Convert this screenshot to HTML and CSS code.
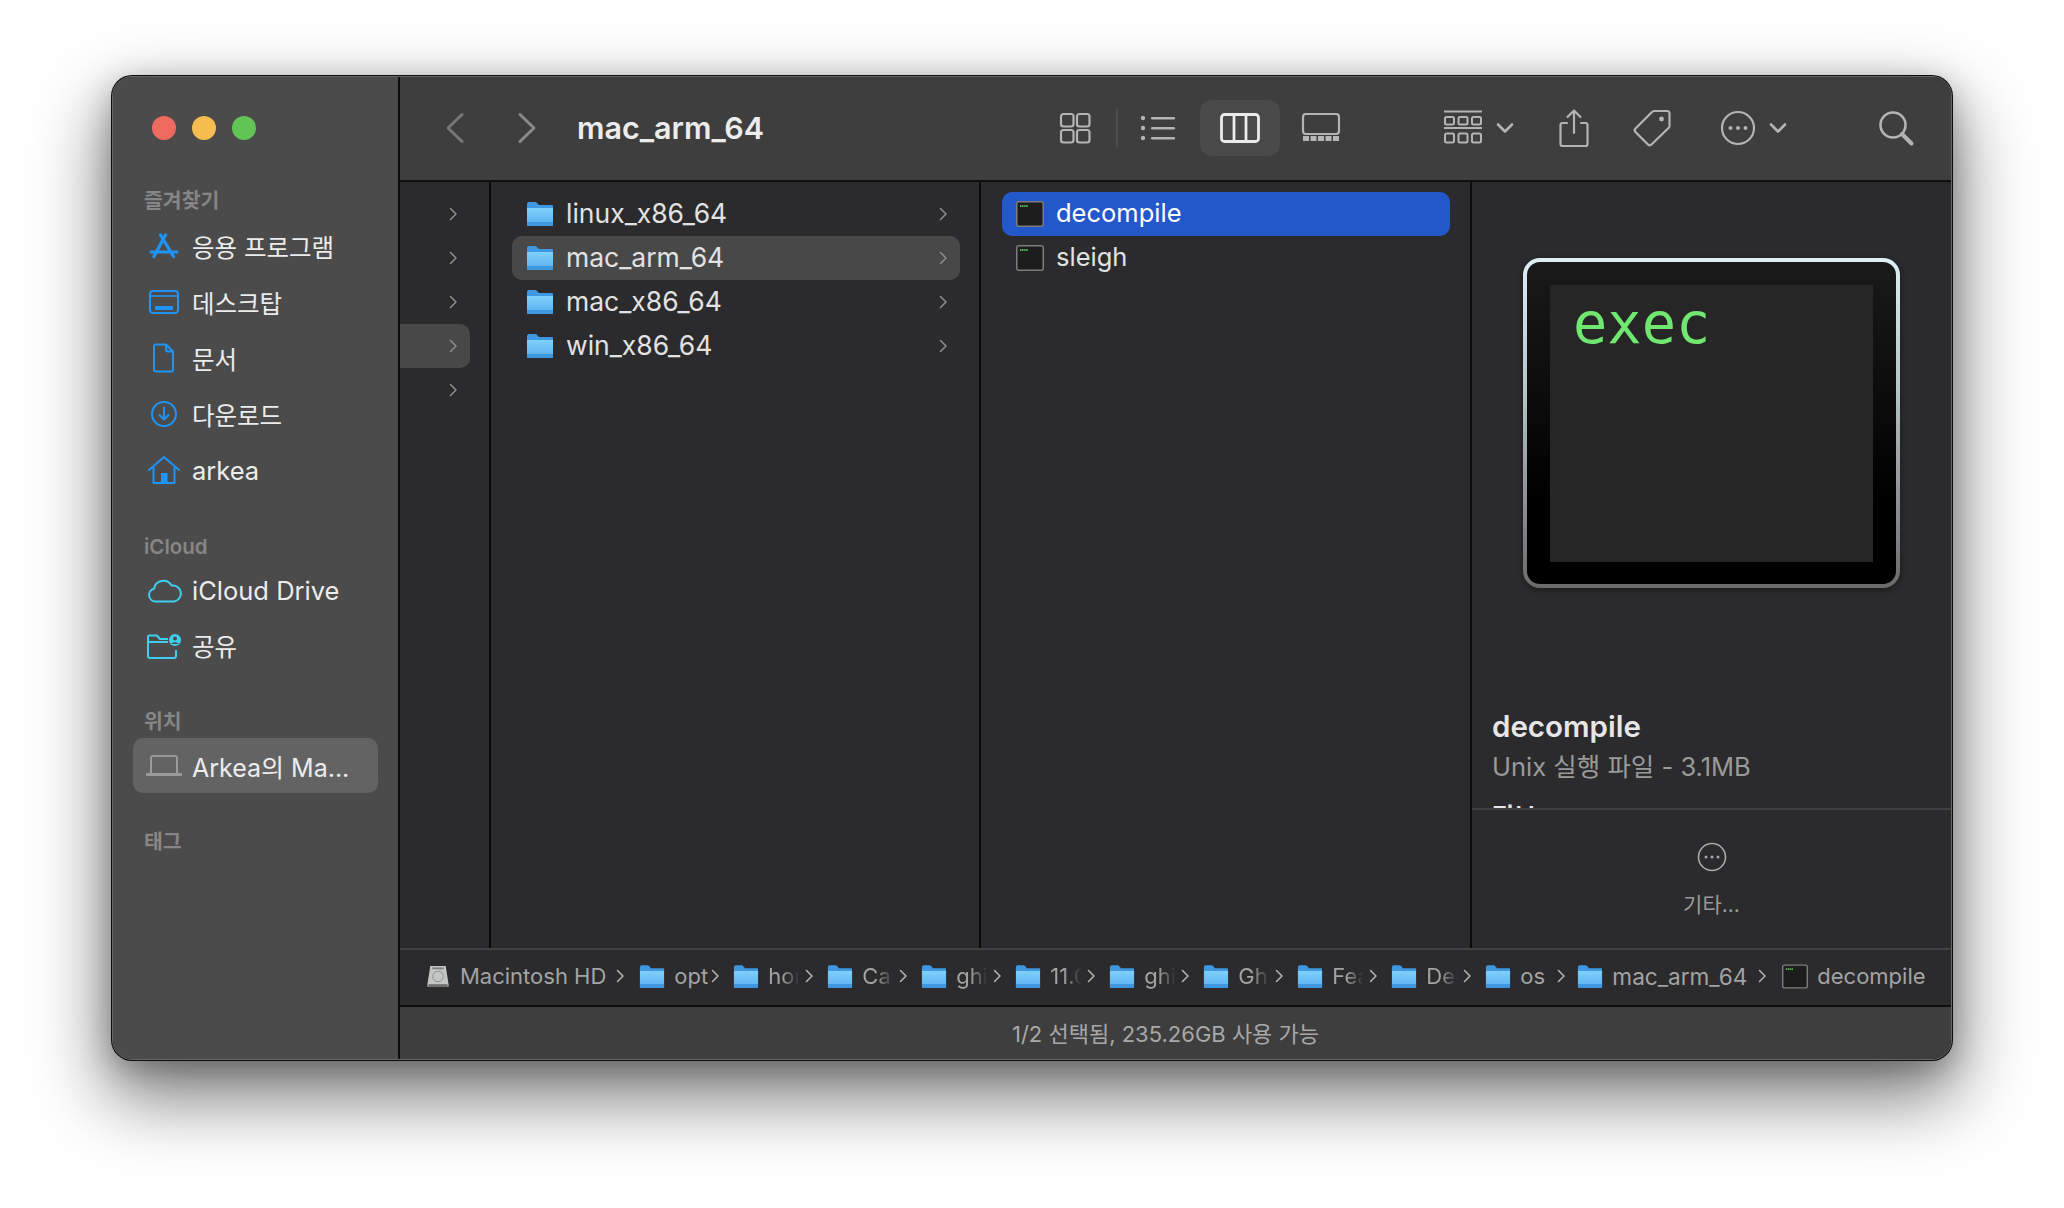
FILE: index.html
```html
<!DOCTYPE html>
<html lang="ko">
<head>
<meta charset="utf-8">
<title>mac_arm_64</title>
<link rel="stylesheet" href="styles.css">
</head>
<body>
<svg class="defs" aria-hidden="true">
  <defs>
    <linearGradient id="fg" x1="0" y1="0" x2="0" y2="1"><stop offset="0" stop-color="#7fd0fb"/><stop offset="1" stop-color="#58b0ef"/></linearGradient>
    <symbol id="folder" viewBox="0 0 28 26">
      <path d="M1 3a2 2 0 0 1 2-2h7l3 3h13a1 1 0 0 1 1 1v4H1z" fill="#3f97e0"/>
      <path d="M1 7h26v17a1 1 0 0 1-1 1H2a1 1 0 0 1-1-1z" fill="url(#fg)"/>
      <path d="M1 21h26v3a1 1 0 0 1-1 1H2a1 1 0 0 1-1-1z" fill="#3f97e0"/>
    </symbol>
    <symbol id="term" viewBox="0 0 28 26">
      <rect x=".75" y=".75" width="26.500" height="24.500" rx="2" fill="#1d1d1d" stroke="#7d7d7d" stroke-width="1.500"/>
      <path d="M4 5h8" stroke="#55b855" stroke-width="1.800" stroke-dasharray="1.500 .6"/>
    </symbol>
    <symbol id="chev" viewBox="0 0 12 16"><path d="M3.500 2.500 9 8l-5.500 5.500" fill="none" stroke="currentColor" stroke-width="1.500" stroke-linecap="round" stroke-linejoin="round"/></symbol>
    <symbol id="down" viewBox="0 0 20 14"><path d="M3 3.500 10 10.500 17 3.500" fill="none" stroke="currentColor" stroke-width="2.600" stroke-linecap="round" stroke-linejoin="round"/></symbol>
  </defs>
</svg>
<div class="window">
  <aside class="sidebar">
    <div class="lights"><span class="light red"></span><span class="light yellow"></span><span class="light green"></span></div>
    <h2 class="side-head first">즐겨찾기</h2>
    <div class="side-row"><svg class="side-icon blue" viewBox="0 0 36 30"><path d="M14.500 4 27.500 25.500M19.500 4 8 25.500M5 21h26" fill="none" stroke="currentColor" stroke-width="3.200" stroke-linecap="round"/></svg><span class="ko">응용 프로그램</span></div>
    <div class="side-row"><svg class="side-icon blue" viewBox="0 0 36 30"><rect x="4" y="4" width="28" height="22" rx="3" fill="none" stroke="currentColor" stroke-width="2"/><path d="M4 9h28" stroke="currentColor" stroke-width="1.500"/><rect x="9" y="19" width="18" height="4" fill="currentColor"/></svg><span class="ko">데스크탑</span></div>
    <div class="side-row"><svg class="side-icon blue" viewBox="0 0 36 30"><path d="M10 1.500h10l7 7v18a2 2 0 0 1-2 2H10a2 2 0 0 1-2-2v-23a2 2 0 0 1 2-2zM20 1.500v5a2 2 0 0 0 2 2h5" fill="none" stroke="currentColor" stroke-width="2" stroke-linejoin="round"/></svg><span class="ko">문서</span></div>
    <div class="side-row"><svg class="side-icon blue" viewBox="0 0 36 30"><circle cx="18" cy="15" r="12" fill="none" stroke="currentColor" stroke-width="2"/><path d="M18 8.500v12M13.500 16l4.500 4.500 4.500-4.500" fill="none" stroke="currentColor" stroke-width="2" stroke-linecap="round" stroke-linejoin="round"/></svg><span class="ko">다운로드</span></div>
    <div class="side-row"><svg class="side-icon blue" viewBox="0 0 36 30"><path d="M3 15 18 2l15 13M7.500 12.500V28h21V12.500" fill="none" stroke="currentColor" stroke-width="2" stroke-linecap="round" stroke-linejoin="round"/><rect x="15" y="18" width="6.500" height="10" fill="currentColor"/></svg><span>arkea</span></div>
    <h2 class="side-head">iCloud</h2>
    <div class="side-row short"><svg class="side-icon cyan" viewBox="0 0 36 30"><path d="M9.500 25.500a6.500 6.500 0 0 1-1.500-12.800A9.500 9.500 0 0 1 25.500 9.500a8 8 0 0 1 2.500 16z" fill="none" stroke="currentColor" stroke-width="2" stroke-linejoin="round"/></svg><span>iCloud Drive</span></div>
    <div class="side-row short"><svg class="side-icon cyan" viewBox="0 0 36 30"><path d="M22 8H14l-3-3.500H3.500A1.500 1.500 0 0 0 2 6v19a2 2 0 0 0 2 2h24a2 2 0 0 0 2-2v-6M2 11h20" fill="none" stroke="currentColor" stroke-width="2" stroke-linejoin="round"/><circle cx="29" cy="9" r="6" fill="currentColor"/><circle cx="29" cy="7.500" r="2" fill="#4b4b4b"/><path d="M25 13a4.500 3 0 0 1 8 0z" fill="#4b4b4b"/></svg><span class="ko">공유</span></div>
    <h2 class="side-head">위치</h2>
    <div class="side-row active"><svg class="side-icon grey" viewBox="0 0 36 30"><path d="M5 22V7a2 2 0 0 1 2-2h22a2 2 0 0 1 2 2v15" fill="none" stroke="currentColor" stroke-width="2"/><rect x="0" y="22" width="36" height="3" rx="1" fill="currentColor"/></svg><span class="mixed">Arkea의 Ma...</span></div>
    <h2 class="side-head">태그</h2>
  </aside>
  <main class="main">
    <header class="toolbar">
      <svg class="nav back" viewBox="0 0 36 32"><path d="M25 2.500 11 16l14 13.500" fill="none" stroke="currentColor" stroke-width="3" stroke-linecap="round" stroke-linejoin="round"/></svg>
      <svg class="nav forward" viewBox="0 0 36 32"><path d="M11 2.500 25 16 11 29.500" fill="none" stroke="currentColor" stroke-width="3" stroke-linecap="round" stroke-linejoin="round"/></svg>
      <h1 class="title">mac_arm_64</h1>
      <div class="views">
        <svg class="tool wide" viewBox="0 0 82 40"><g fill="none" stroke="currentColor" stroke-width="2.200"><rect x="27" y="6" width="12.500" height="12.500" rx="2.500"/><rect x="43" y="6" width="12.500" height="12.500" rx="2.500"/><rect x="27" y="22" width="12.500" height="12.500" rx="2.500"/><rect x="43" y="22" width="12.500" height="12.500" rx="2.500"/></g></svg>
        <span class="sep"></span>
        <svg class="tool view" viewBox="0 0 80 40"><g fill="currentColor"><circle cx="25" cy="10" r="2.200"/><circle cx="25" cy="20" r="2.200"/><circle cx="25" cy="30" r="2.200"/><rect x="33" y="9" width="24" height="2.400" rx="1.200"/><rect x="33" y="19" width="24" height="2.400" rx="1.200"/><rect x="33" y="29" width="24" height="2.400" rx="1.200"/></g></svg>
        <span class="view-on"><svg class="tool view light-icon" viewBox="0 0 80 40"><g fill="none" stroke="currentColor" stroke-width="2.800"><rect x="21.500" y="6.500" width="37" height="27" rx="3"/><path d="M34 6.500v27M46 6.500v27"/></g></svg></span>
        <svg class="tool view" viewBox="0 0 80 40"><g fill="none" stroke="currentColor" stroke-width="2.200"><rect x="22" y="6" width="36" height="20" rx="3"/></g><path d="M22 30.500h36" stroke="currentColor" stroke-width="5" stroke-dasharray="6 1.500"/></svg>
      </div>
      <svg class="tool btn group" viewBox="0 0 40 40"><g fill="none" stroke="currentColor" stroke-width="2"><path d="M1 3.500h38M1 20h38"/><rect x="2" y="9" width="9" height="7.500" rx="1.500"/><rect x="15.500" y="9" width="9" height="7.500" rx="1.500"/><rect x="29" y="9" width="9" height="7.500" rx="1.500"/><rect x="2" y="25.500" width="9" height="9" rx="1.500"/><rect x="15.500" y="25.500" width="9" height="9" rx="1.500"/><rect x="29" y="25.500" width="9" height="9" rx="1.500"/></g></svg>
      <svg class="caret caret-a"><use href="#down"/></svg>
      <svg class="tool btn share" viewBox="0 0 40 40"><path d="M13 15H8.500a2 2 0 0 0-2 2v19a2 2 0 0 0 2 2h23a2 2 0 0 0 2-2V17a2 2 0 0 0-2-2H27M20 25V3M13.500 9 20 2.500 26.500 9" fill="none" stroke="currentColor" stroke-width="2.200" stroke-linecap="round" stroke-linejoin="round"/></svg>
      <svg class="tool btn tag" viewBox="0 0 40 40"><path d="M22 3h13a2.500 2.500 0 0 1 2.500 2.500V18a3 3 0 0 1-1 2L19.500 36.500a2.500 2.500 0 0 1-3.500 0L3.500 24a2.500 2.500 0 0 1 0-3.500L20 4a3 3 0 0 1 2-1z" fill="none" stroke="currentColor" stroke-width="2.200" stroke-linejoin="round"/><circle cx="29.500" cy="11" r="2.400" fill="currentColor"/></svg>
      <svg class="tool btn more" viewBox="0 0 40 40"><circle cx="20" cy="20" r="16" fill="none" stroke="currentColor" stroke-width="2.200"/><circle cx="12.500" cy="20" r="2" fill="currentColor"/><circle cx="20" cy="20" r="2" fill="currentColor"/><circle cx="27.500" cy="20" r="2" fill="currentColor"/></svg>
      <svg class="caret caret-b"><use href="#down"/></svg>
      <svg class="tool btn search" viewBox="0 0 40 40"><circle cx="17" cy="17" r="12.500" fill="none" stroke="currentColor" stroke-width="2.600"/><path d="M26 26l9.500 9.500" stroke="currentColor" stroke-width="4" stroke-linecap="round"/></svg>
    </header>
    <section class="browser">
      <div class="col col-a">
        <div class="row"><svg class="chev"><use href="#chev"/></svg></div>
        <div class="row"><svg class="chev"><use href="#chev"/></svg></div>
        <div class="row"><svg class="chev"><use href="#chev"/></svg></div>
        <div class="row on-grey"><svg class="chev"><use href="#chev"/></svg></div>
        <div class="row"><svg class="chev"><use href="#chev"/></svg></div>
      </div>
      <div class="col col-folders">
        <div class="row item"><svg class="file"><use href="#folder"/></svg><span class="name">linux_x86_64</span><svg class="chev"><use href="#chev"/></svg></div>
        <div class="row item on-grey"><svg class="file"><use href="#folder"/></svg><span class="name">mac_arm_64</span><svg class="chev"><use href="#chev"/></svg></div>
        <div class="row item"><svg class="file"><use href="#folder"/></svg><span class="name">mac_x86_64</span><svg class="chev"><use href="#chev"/></svg></div>
        <div class="row item"><svg class="file"><use href="#folder"/></svg><span class="name">win_x86_64</span><svg class="chev"><use href="#chev"/></svg></div>
      </div>
      <div class="col col-files">
        <div class="row item on-blue"><svg class="file"><use href="#term"/></svg><span class="name">decompile</span></div>
        <div class="row item"><svg class="file"><use href="#term"/></svg><span class="name">sleigh</span></div>
      </div>
      <div class="preview">
        <div class="preview-body">
          <div class="exec-icon"><div class="exec-frame"><div class="exec-screen">exec</div></div></div>
          <div class="pv-name">decompile</div>
          <div class="pv-kind">Unix 실행 파일 - 3.1MB</div>
          <div class="pv-section">정보</div>
        </div>
        <div class="preview-foot">
          <svg class="pv-more" viewBox="0 0 30 30"><circle cx="15" cy="15" r="13.500" fill="none" stroke="currentColor" stroke-width="1.600"/><circle cx="9" cy="15" r="1.500" fill="currentColor"/><circle cx="15" cy="15" r="1.500" fill="currentColor"/><circle cx="21" cy="15" r="1.500" fill="currentColor"/></svg>
          <div class="pv-label">기타...</div>
        </div>
      </div>
    </section>
    <nav class="pathbar">
      <span class="crumb root"><svg class="crumb-icon disk" viewBox="0 0 26 26"><path d="M5 2h16l3 19v2a1 1 0 0 1-1 1H3a1 1 0 0 1-1-1v-2z" fill="#c4c6c6"/><path d="M7 3.500h12v2H7z" fill="#7d7d7d"/><circle cx="13" cy="13" r="5.500" fill="none" stroke="#8b8b8b"/><path d="M3 21h20v3H3z" fill="#6d6d6d"/></svg><span class="crumb-text">Macintosh HD</span></span><svg class="crumb-sep"><use href="#chev"/></svg>
      <span class="crumb"><svg class="crumb-icon"><use href="#folder"/></svg><span class="crumb-text cut">opt</span></span><svg class="crumb-sep tight"><use href="#chev"/></svg>
      <span class="crumb"><svg class="crumb-icon"><use href="#folder"/></svg><span class="crumb-text cut fade">homebrew</span></span><svg class="crumb-sep tight"><use href="#chev"/></svg>
      <span class="crumb"><svg class="crumb-icon"><use href="#folder"/></svg><span class="crumb-text cut fade">Caskroom</span></span><svg class="crumb-sep tight"><use href="#chev"/></svg>
      <span class="crumb"><svg class="crumb-icon"><use href="#folder"/></svg><span class="crumb-text cut fade">ghidra</span></span><svg class="crumb-sep tight"><use href="#chev"/></svg>
      <span class="crumb"><svg class="crumb-icon"><use href="#folder"/></svg><span class="crumb-text cut fade">11.0.3</span></span><svg class="crumb-sep tight"><use href="#chev"/></svg>
      <span class="crumb"><svg class="crumb-icon"><use href="#folder"/></svg><span class="crumb-text cut fade">ghidra_11</span></span><svg class="crumb-sep tight"><use href="#chev"/></svg>
      <span class="crumb"><svg class="crumb-icon"><use href="#folder"/></svg><span class="crumb-text cut fade">Ghidra</span></span><svg class="crumb-sep tight"><use href="#chev"/></svg>
      <span class="crumb"><svg class="crumb-icon"><use href="#folder"/></svg><span class="crumb-text cut fade">Features</span></span><svg class="crumb-sep tight"><use href="#chev"/></svg>
      <span class="crumb"><svg class="crumb-icon"><use href="#folder"/></svg><span class="crumb-text cut fade">Decompiler</span></span><svg class="crumb-sep tight"><use href="#chev"/></svg>
      <span class="crumb"><svg class="crumb-icon"><use href="#folder"/></svg><span class="crumb-text cut">os</span></span><svg class="crumb-sep tight os"><use href="#chev"/></svg>
      <span class="crumb"><svg class="crumb-icon"><use href="#folder"/></svg><span class="crumb-text current">mac_arm_64</span></span><svg class="crumb-sep last"><use href="#chev"/></svg>
      <span class="crumb"><svg class="crumb-icon"><use href="#term"/></svg><span class="crumb-text">decompile</span></span>
    </nav>
    <footer class="status">1/2 선택됨, 235.26GB 사용 가능</footer>
  </main>
</div>
</body>
</html>
```

FILE: styles.css
```css
* { box-sizing: border-box; }
html, body { margin: 0; height: 100%; background: #fff; overflow: hidden; }
body { font-family: Inter, "Noto Sans CJK KR", sans-serif; padding: 76px 0 0 112px; }
.defs { position: absolute; width: 0; height: 0; }

.window {
  display: flex;
  width: 1840px;
  height: 984px;
  border-radius: 20px;
  overflow: hidden;
  border: 1px solid #666;
  box-shadow: 0 0 0 1px #0d0d0d, 0 32px 72px 6px rgba(0, 0, 0, .52), 0 8px 30px rgba(0, 0, 0, .25);
  background: #2b2b2d;
}

/* Sidebar */
.sidebar { width: 287px; flex: none; background: #4b4b4b; border-right: 2px solid #0e0e0e; padding: 39px 20px 0; }
.lights { display: flex; gap: 16px; padding-left: 19px; height: 24px; }
.light { width: 24px; height: 24px; border-radius: 50%; }
.red { background: #ee6a5f; }
.yellow { background: #f5bd4f; }
.green { background: #61c454; }
.side-head { margin: 34px 0 1px 11px; font-size: 20.5px; line-height: 30px; font-weight: 600; color: #868686; }
.side-head.first { margin-top: 46px; margin-bottom: 2px; }
.side-row { display: flex; align-items: center; gap: 10px; height: 56px; padding-left: 13px; font-size: 25.5px; color: #ececec; border-radius: 10px; white-space: nowrap; }
.side-row.short { height: 55px; }
.side-row.active { background: #636363; height: 55px; }
.ko { font-size: 24.5px; }
.mixed { font-size: 25px; }
.side-icon { width: 36px; height: 30px; flex: none; }
.blue { color: #1f94f5; }
.cyan { color: #3fd0f0; }
.grey { color: #9a9a9a; }

/* Main */
.main { flex: 1; min-width: 0; display: flex; flex-direction: column; }
.toolbar { height: 105px; flex: none; display: flex; align-items: center; background: #3e3e3e; border-bottom: 2px solid #101010; padding: 0 35px 2px 37px; color: #b4b4b4; }
.nav { width: 36px; height: 32px; flex: none; }
.back { color: #777; }
.forward { color: #8a8a8a; margin-left: 36px; }
.title { margin: 0 0 0 32px; font-size: 30.5px; font-weight: 600; color: #ececec; white-space: nowrap; }
.views { display: flex; align-items: center; margin-left: auto; }
.tool { display: block; height: 40px; flex: none; }
.tool.wide { width: 82px; }
.tool.view { width: 80px; }
.sep { width: 2px; height: 40px; background: #4c4c4c; }
.view-on { display: block; width: 80px; height: 56px; padding: 8px 0; background: #4a4a4a; border-radius: 12px; margin: 0 1px 0 2px; }
.light-icon { color: #ececec; }
.btn { width: 40px; }
.group { margin-left: 82px; }
.share { margin-left: 39px; }
.tag { margin-left: 38px; }
.more { margin-left: 46px; }
.search { margin-left: 88px; }
.caret { width: 20px; height: 14px; flex: none; }
.caret-a { margin-left: 12px; }
.caret-b { margin-left: 10px; }

/* Columns */
.browser { flex: 1; min-height: 0; display: flex; }
.col { width: 490px; flex: none; padding: 10px 19px 0 21px; border-right: 2px solid #0b0b0b; }
.col-a { width: 91px; padding: 10px 0 0; }
.col-files { width: 491px; padding-right: 20px; }
.row { height: 44px; display: flex; align-items: center; justify-content: flex-end; padding-right: 14px; color: #8e8e8e; border-radius: 0 10px 10px 0; }
.col-a .row { width: 70px; padding-right: 11px; }
.item { justify-content: flex-start; padding: 0 11px 0 14px; gap: 12px; border-radius: 10px; color: #e2e2e2; white-space: nowrap; }
.col-folders .item { font-size: 26.5px; }
.col-files .item { font-size: 25.5px; }
.on-grey { background: #484848; }
.on-blue { background: #2358cb; color: #fff; }
.file { width: 28px; height: 26px; flex: none; }
.name { flex: 1; line-height: 42px; margin-bottom: 2px; }
.chev { width: 12px; height: 16px; flex: none; color: #8e8e8e; }

/* Preview */
.preview { flex: 1; min-width: 0; display: flex; flex-direction: column; }
.preview-body { height: 626px; flex: none; overflow: hidden; padding: 76px 20px 0; }
.exec-icon { width: 377px; height: 330px; margin-left: 31px; padding: 4px; border-radius: 17px; background: linear-gradient(#dcf0f6, #b7c3c7 40%, #6a6a6a); box-shadow: 0 2px 6px rgba(0, 0, 0, .4); }
.exec-frame { height: 100%; padding: 23px 23px 22px; border-radius: 13px; background: linear-gradient(#1a1a1a, #000 75%); }
.exec-screen { height: 100%; padding: 4px 23px; background: #262626; color: #70e870; font-family: "DejaVu Sans Mono", monospace; font-size: 57px; line-height: 68px; }
.pv-name { margin-top: 120px; font-size: 29.5px; line-height: 36px; font-weight: 600; color: #e6e6e6; }
.pv-kind { margin-top: 5px; font-size: 25.5px; line-height: 36px; color: #9a9a9a; white-space: nowrap; }
.pv-section { margin-top: 16px; font-size: 24px; line-height: 32px; font-weight: 600; color: #e6e6e6; }
.preview-foot { flex: 1; border-top: 2px solid #3f3f3f; display: flex; flex-direction: column; align-items: center; padding-top: 32px; }
.pv-more { width: 30px; height: 30px; color: #a8a8a8; }
.pv-label { margin-top: 18px; font-size: 21px; line-height: 30px; color: #9a9a9a; }

/* Path bar */
.pathbar { height: 59px; flex: none; display: flex; align-items: center; background: #2b2b2d; border-top: 2px solid #414141; border-bottom: 2px solid #0f0f0f; padding: 0 0 3px 25px; font-size: 22px; color: #a3a3a3; white-space: nowrap; }
.crumb { display: flex; align-items: center; gap: 9px; flex: none; }
.crumb-icon { width: 26px; height: 25px; flex: none; }
.crumb-text { display: block; }
.crumb-text.current { font-size: 22.6px; }
.cut { width: 35px; overflow: hidden; }
.fade { -webkit-mask-image: linear-gradient(90deg, #000 40%, transparent 90%); mask-image: linear-gradient(90deg, #000 40%, transparent 90%); }
.crumb-sep { width: 12px; height: 16px; flex: none; margin: 0 13px 0 8px; color: #b4b4b4; }
.crumb-sep.tight { margin: 0 12px 0 0; }
.crumb-sep.os { margin: 0 10px 0 0; }
.crumb-sep.last { margin: 0 14px 0 9px; }

/* Status bar */
.status { height: 52px; flex: none; display: flex; align-items: center; justify-content: center; padding: 0 20px 2px 0; background: #3e3e3e; font-size: 22px; color: #a8a8a8; }
```
